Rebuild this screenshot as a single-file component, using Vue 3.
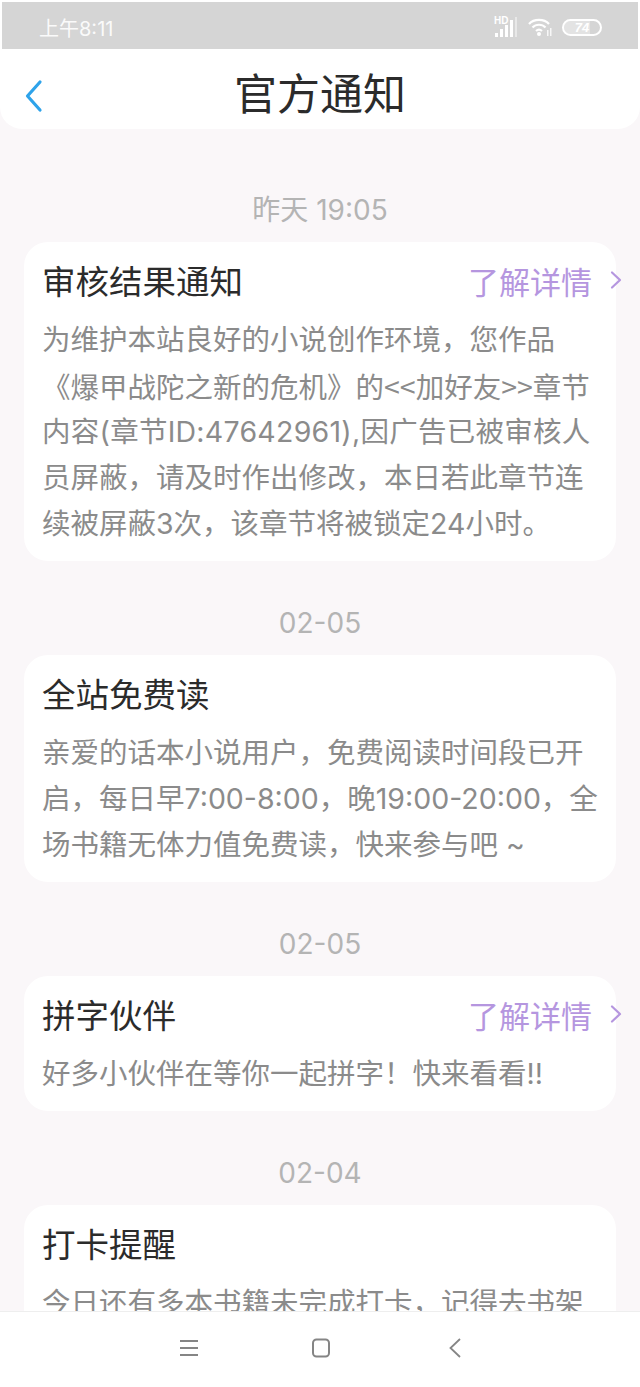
<script setup>
const notices = [
  {
    date: '昨天 19:05',
    title: '审核结果通知',
    more: true,
    lines: [
      '为维护本站良好的小说创作环境，您作品',
      '《爆甲战陀之新的危机》的<<加好友>>章节',
      '内容(章节ID:47642961),因广告已被审核人',
      '员屏蔽，请及时作出修改，本日若此章节连',
      '续被屏蔽3次，该章节将被锁定24小时。'
    ]
  },
  {
    date: '02-05',
    title: '全站免费读',
    more: false,
    lines: [
      '亲爱的话本小说用户，免费阅读时间段已开',
      '启，每日早7:00-8:00，晚19:00-20:00，全',
      '场书籍无体力值免费读，快来参与吧 ~'
    ]
  },
  {
    date: '02-05',
    title: '拼字伙伴',
    more: true,
    lines: ['好多小伙伴在等你一起拼字！快来看看!!']
  },
  {
    date: '02-04',
    title: '打卡提醒',
    more: false,
    lines: ['今日还有多本书籍未完成打卡，记得去书架']
  }
]
</script>

<template>
  <div class="phone">
    <div class="status-wrap">
      <div class="status-bar">
        <span class="time">上午8:11</span>
        <div class="status-icons">
          <svg class="signal" viewBox="0 0 24 22" width="24" height="22">
            <text x="0" y="8" class="hd">HD</text>
            <rect x="1" y="17" width="3" height="4" fill="#fff" />
            <rect x="6" y="13" width="3" height="8" fill="#fff" />
            <rect x="11" y="9" width="3" height="12" fill="#fff" />
            <rect x="16" y="4" width="3" height="17" fill="#fff" />
            <rect x="21" y="1" width="2" height="20" fill="#fff" opacity="0.45" />
          </svg>
          <svg class="wifi" viewBox="0 0 24 20" width="24" height="20">
            <path d="M1 7 C6 1.500 16 1.500 21 7" fill="none" stroke="#fff" stroke-width="2.200" />
            <path d="M4.500 10.500 C8 6.800 14 6.800 17.500 10.500" fill="none" stroke="#fff" stroke-width="2.200" />
            <path d="M8 14 C10 12.200 12 12.200 14 14" fill="none" stroke="#fff" stroke-width="2.200" />
            <circle cx="11" cy="17" r="2" fill="#fff" />
            <rect x="19" y="13" width="1.500" height="6" fill="#fff" opacity="0.8" />
            <rect x="22" y="11" width="1.500" height="8" fill="#fff" opacity="0.8" />
          </svg>
          <div class="battery">
            <span class="battery-fill"></span>
            <span class="battery-num">74</span>
          </div>
        </div>
      </div>
    </div>

    <header class="nav">
      <svg class="back" viewBox="0 0 20 34" width="20" height="34">
        <path d="M16 3 L3.500 17 L16 31" fill="none" stroke="#2ea3ea" stroke-width="3.200" stroke-linecap="round" stroke-linejoin="round" />
      </svg>
      <h1 class="nav-title">官方通知</h1>
    </header>

    <main class="list">
      <section v-for="(item, i) in notices" :key="i" class="group">
        <div class="date">{{ item.date }}</div>
        <div class="card">
          <div class="card-head">
            <h2 class="card-title">{{ item.title }}</h2>
            <div v-if="item.more" class="more">
              <span>了解详情</span>
              <svg viewBox="0 0 12 20" width="12" height="20">
                <path d="M2 2.500 L10 10 L2 17.500" fill="none" stroke="#b596df" stroke-width="2.200" stroke-linecap="round" stroke-linejoin="round" />
              </svg>
            </div>
          </div>
          <p class="card-body">
            <span
              v-for="(line, n) in item.lines"
              :key="n"
              class="line"
              :class="{ 'line-cjk': line.includes('<<'), 'line-wide': line.includes('ID:') }"
            >{{ line }}</span>
          </p>
        </div>
      </section>
    </main>

    <footer class="bottom-bar">
      <svg viewBox="0 0 20 18" width="20" height="18">
        <path d="M1 2 H19 M1 9 H19 M1 16 H19" fill="none" stroke="#858585" stroke-width="1.800" />
      </svg>
      <svg viewBox="0 0 20 20" width="20" height="20">
        <rect x="2" y="1.500" width="16" height="17" rx="3.500" fill="none" stroke="#858585" stroke-width="2" />
      </svg>
      <svg class="nav-back" viewBox="0 0 14 20" width="14" height="20">
        <path d="M12 1 L2.500 10 L12 19" fill="none" stroke="#858585" stroke-width="1.800" />
      </svg>
    </footer>
  </div>
</template>

<style scoped>
.phone {
  position: relative;
  width: 640px;
  height: 1387px;
  overflow: hidden;
  background: #faf7f9;
  font-family: Inter, "Noto Sans CJK SC", "Noto Sans", sans-serif;
}

.status-wrap {
  background: #fff;
  padding: 2px 2px 0;
}

.status-bar {
  height: 47px;
  box-sizing: border-box;
  padding: 3px 36px 0 37px;
  background: #d5d5d5;
  display: flex;
  align-items: center;
  justify-content: space-between;
  color: #fff;
}

.time {
  font-size: 20px;
  opacity: 0.9;
}

.status-icons {
  display: flex;
  align-items: center;
  gap: 10px;
}

.hd {
  font-family: "Liberation Sans", sans-serif;
  font-size: 10px;
  font-weight: 700;
  fill: #fff;
}

.battery {
  position: relative;
  width: 40px;
  height: 17px;
  box-sizing: border-box;
  border: 2px solid #fff;
  border-radius: 9px;
  display: flex;
  align-items: center;
  justify-content: center;
  overflow: hidden;
}

.battery-fill {
  position: absolute;
  left: 0;
  top: 0;
  bottom: 0;
  width: 72%;
  background: rgba(255, 255, 255, 0.35);
}

.battery-num {
  position: relative;
  font-family: "Liberation Sans", sans-serif;
  font-size: 13px;
  font-weight: 700;
  font-style: italic;
  color: #fff;
}

.nav {
  position: relative;
  height: 80px;
  box-sizing: border-box;
  padding-top: 11px;
  background: #fff;
  border-radius: 0 0 22px 22px;
  display: flex;
  align-items: center;
  justify-content: center;
}

.back {
  position: absolute;
  left: 24px;
  top: 30px;
}

.nav-title {
  margin: 0;
  font-size: 43px;
  font-weight: 400;
  line-height: 1;
  color: #2b2b2b;
}

.list {
  padding: 61px 24px 0;
  display: flex;
  flex-direction: column;
  gap: 42px;
}

.group {
  display: flex;
  flex-direction: column;
  gap: 14px;
}

.date {
  height: 38px;
  line-height: 40px;
  text-align: center;
  font-size: 28px;
  color: #b4b4b4;
}

.card {
  background: #fff;
  border-radius: 24px;
  padding: 17px 18px 14px;
}

.card-head {
  display: flex;
  align-items: center;
  justify-content: space-between;
  height: 46px;
  margin-bottom: 12px;
}

.card-title {
  margin: 0;
  font-size: 33.500px;
  font-weight: 400;
  line-height: 46px;
  color: #2b2b2b;
}

.more {
  display: flex;
  align-items: center;
  gap: 18px;
  margin-right: -24px;
  margin-bottom: 4px;
  font-size: 31px;
  color: #b596df;
}

.card-body {
  margin: 0;
  font-size: 28.500px;
  line-height: 46px;
  color: #8b8b8b;
}

.line {
  display: block;
  white-space: nowrap;
}

.line-cjk {
  font-family: "Noto Sans CJK SC", sans-serif;
}

.line-wide {
  letter-spacing: 0.25px;
}

.bottom-bar {
  position: absolute;
  left: 0;
  right: 0;
  bottom: 0;
  height: 76px;
  box-sizing: border-box;
  padding-bottom: 4px;
  border-top: 1px solid #eeeeee;
  background: #fff;
  display: flex;
  align-items: center;
  justify-content: center;
  gap: 112px;
}

.nav-back {
  margin-left: 5px;
}
</style>
